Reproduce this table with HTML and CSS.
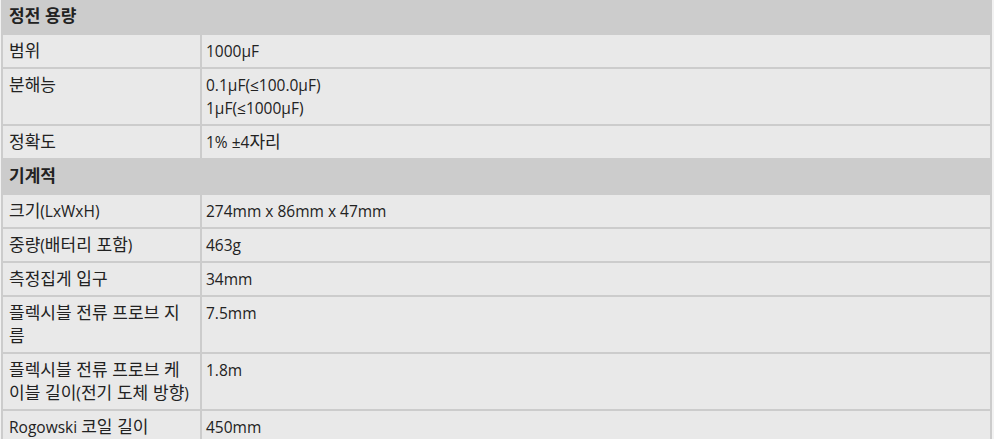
FILE: index.html
```html
<!DOCTYPE html>
<html lang="ko">
<head>
<meta charset="utf-8">
<title>사양</title>
<link rel="stylesheet" href="styles.css">
</head>
<body>
<table class="spec">
  <colgroup><col class="c1"><col class="c2"></colgroup>
  <tbody>
    <tr><th colspan="2"><span class="k">정전 용량</span></th></tr>
    <tr><td><span class="k">범위</span></td><td>1000µF</td></tr>
    <tr><td><span class="k">분해능</span></td><td>0.1µF(≤100.0µF)<br>1µF(≤1000µF)</td></tr>
    <tr><td><span class="k">정확도</span></td><td>1% ±4<span class="k">자리</span></td></tr>
    <tr><th colspan="2"><span class="k">기계적</span></th></tr>
    <tr><td><span class="k">크기</span>(LxWxH)</td><td>274mm x 86mm x 47mm</td></tr>
    <tr><td><span class="k">중량</span>(<span class="k">배터리 포함</span>)</td><td>463g</td></tr>
    <tr><td><span class="k">측정집게 입구</span></td><td>34mm</td></tr>
    <tr><td><span class="k">플렉시블 전류 프로브 지름</span></td><td>7.5mm</td></tr>
    <tr><td><span class="k">플렉시블 전류 프로브 케이블 길이</span>(<span class="k">전기 도체 방향</span>)</td><td>1.8m</td></tr>
    <tr><td>Rogowski <span class="k">코일 길이</span></td><td>450mm</td></tr>
  </tbody>
</table>
</body>
</html>
```
FILE: styles.css
```css
html, body {
  margin: 0;
  padding: 0;
  background: #f2f2f2;
}
body {
  font-family: "Open Sans", "Noto Sans CJK KR", sans-serif;
  font-size: 15.5px;
  color: #222;
  overflow: hidden;
}
.k {
  font-family: "Noto Sans CJK KR", sans-serif;
  font-size: 17px;
  line-height: 17px;
}
.spec {
  width: 991px;
  margin: -2px 0 0 1px;
  border-collapse: separate;
  border-spacing: 2px;
  background: #cccccc;
  table-layout: fixed;
}
.spec col.c1 { width: 197px; }
.spec th,
.spec td {
  text-align: left;
  vertical-align: top;
  line-height: 23px;
  padding: 5px 5px 4px 5px;
}
.spec th {
  background: #cccccc;
  font-weight: bold;
  color: #222;
  padding: 5px 5px 5px 6px;
}
.spec td {
  background: #e9e9e9;
}
.spec td:first-child {
  padding-left: 6px;
}
.spec td + td {
  padding-left: 4px;
}
```
